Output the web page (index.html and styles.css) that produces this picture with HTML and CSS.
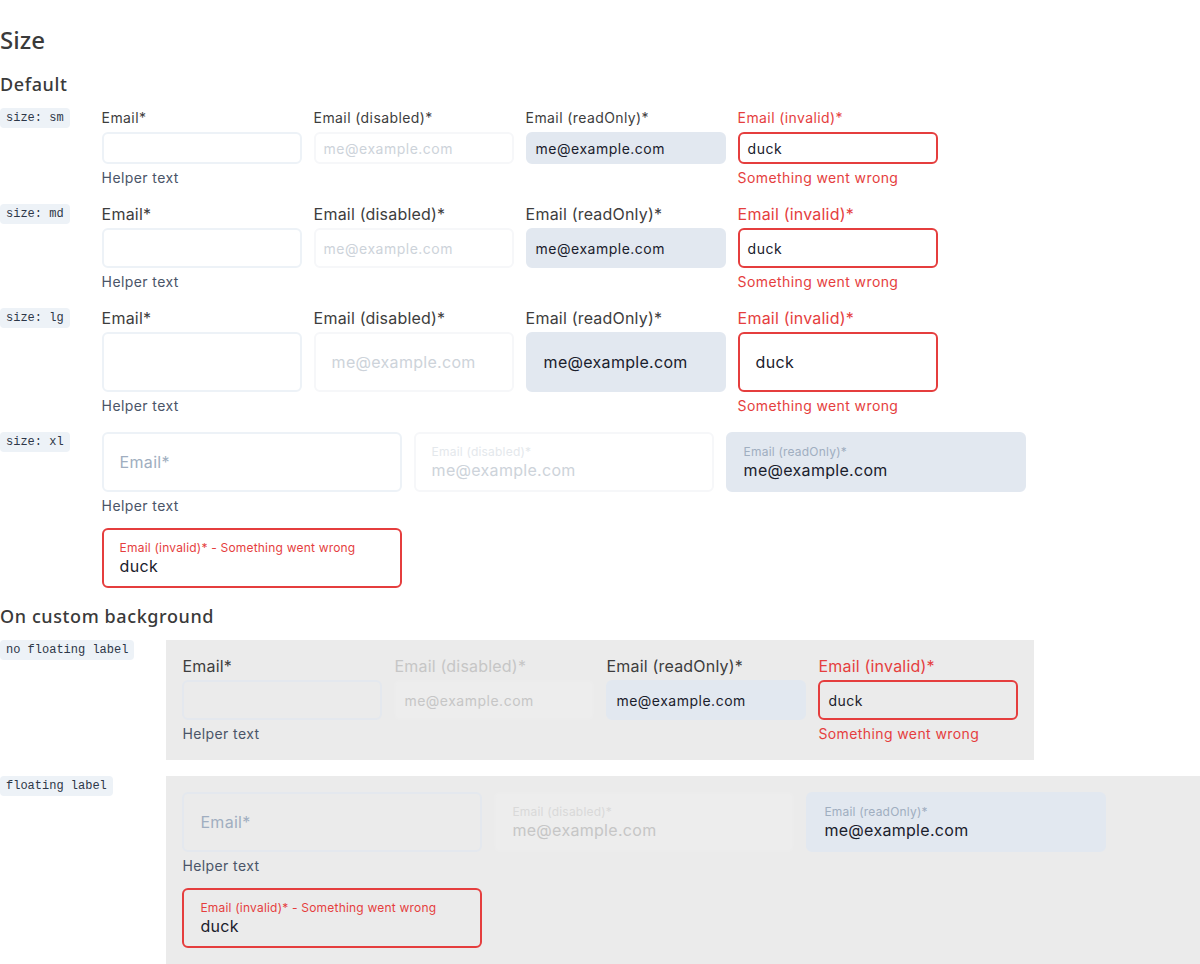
FILE: index.html
```html
<!DOCTYPE html>
<html>
<head>
<meta charset="utf-8">
<link rel="stylesheet" href="styles.css">
</head>
<body>
<h2 class="title">Size</h2>
<h3 class="subtitle">Default</h3>
<div class="grid">
  <span class="tag">size: sm</span>
  <div class="fields">
    <div class="field sm"><div class="label">Email*</div><div class="input"></div><div class="helper">Helper text</div></div>
    <div class="field sm"><div class="label">Email (disabled)*</div><div class="input disabled">me@example.com</div></div>
    <div class="field sm"><div class="label">Email (readOnly)*</div><div class="input readonly">me@example.com</div></div>
    <div class="field sm invalid"><div class="label">Email (invalid)*</div><div class="input">duck</div><div class="helper">Something went wrong</div></div>
  </div>

  <span class="tag">size: md</span>
  <div class="fields">
    <div class="field md"><div class="label">Email*</div><div class="input"></div><div class="helper">Helper text</div></div>
    <div class="field md"><div class="label">Email (disabled)*</div><div class="input disabled">me@example.com</div></div>
    <div class="field md"><div class="label">Email (readOnly)*</div><div class="input readonly">me@example.com</div></div>
    <div class="field md invalid"><div class="label">Email (invalid)*</div><div class="input">duck</div><div class="helper">Something went wrong</div></div>
  </div>

  <span class="tag">size: lg</span>
  <div class="fields">
    <div class="field lg"><div class="label">Email*</div><div class="input"></div><div class="helper">Helper text</div></div>
    <div class="field lg"><div class="label">Email (disabled)*</div><div class="input disabled">me@example.com</div></div>
    <div class="field lg"><div class="label">Email (readOnly)*</div><div class="input readonly">me@example.com</div></div>
    <div class="field lg invalid"><div class="label">Email (invalid)*</div><div class="input">duck</div><div class="helper">Something went wrong</div></div>
  </div>

  <span class="tag">size: xl</span>
  <div class="fields">
    <div class="field xl"><div class="input"><span class="placeholder">Email*</span></div><div class="helper">Helper text</div></div>
    <div class="field xl"><div class="input disabled"><span class="flabel">Email (disabled)*</span><span class="value">me@example.com</span></div></div>
    <div class="field xl"><div class="input readonly"><span class="flabel">Email (readOnly)*</span><span class="value">me@example.com</span></div></div>
    <div class="field xl invalid"><div class="input"><span class="flabel">Email (invalid)* - Something went wrong</span><span class="value">duck</span></div></div>
  </div>
</div>

<h3 class="subtitle section">On custom background</h3>
<div class="grid">
  <span class="tag">no floating label</span>
  <div class="panel">
    <div class="field md"><div class="label">Email*</div><div class="input"></div><div class="helper">Helper text</div></div>
    <div class="field md dis"><div class="label">Email (disabled)*</div><div class="input disabled">me@example.com</div></div>
    <div class="field md"><div class="label">Email (readOnly)*</div><div class="input readonly">me@example.com</div></div>
    <div class="field md invalid"><div class="label">Email (invalid)*</div><div class="input">duck</div><div class="helper">Something went wrong</div></div>
  </div>

  <span class="tag">floating label</span>
  <div class="panel">
    <div class="field xl"><div class="input"><span class="placeholder">Email*</span></div><div class="helper">Helper text</div></div>
    <div class="field xl"><div class="input disabled"><span class="flabel">Email (disabled)*</span><span class="value">me@example.com</span></div></div>
    <div class="field xl"><div class="input readonly"><span class="flabel">Email (readOnly)*</span><span class="value">me@example.com</span></div></div>
    <div class="field xl invalid"><div class="input"><span class="flabel">Email (invalid)* - Something went wrong</span><span class="value">duck</span></div></div>
  </div>
</div>
</body>
</html>
```
FILE: styles.css
```css
html, body {
  margin: 0;
  padding: 0;
}
body {
  font-family: Inter, "Noto Sans", sans-serif;
  color: #3d3d3d;
  background: #ffffff;
}
.title {
  font-family: "Noto Sans", sans-serif;
  font-weight: 500;
  font-size: 24px;
  line-height: 32px;
  margin: 24px 0 16px;
  color: #3a3a3a;
  letter-spacing: 0;
}
.subtitle {
  font-family: "Noto Sans", sans-serif;
  font-weight: 500;
  font-size: 18px;
  line-height: 24px;
  margin: 0 0 12px;
  color: #3a3a3a;
  letter-spacing: 0.6px;
}
.subtitle.section {
  margin-top: 16px;
}
.grid {
  display: grid;
  grid-template-columns: max-content 1fr;
  column-gap: 32px;
  row-gap: 16px;
  align-items: start;
}
.tag {
  justify-self: start;
  font-family: "Liberation Mono", monospace;
  font-size: 12px;
  line-height: 20px;
  padding: 0 6px;
  background: #edf2f7;
  border-radius: 4px;
  color: #2d3748;
}
.fields, .panel {
  display: flex;
  flex-wrap: wrap;
  gap: 12px;
}
.panel {
  justify-self: start;
  background: #ebebeb;
  padding: 16px;
}
.field {
  width: 200px;
  display: flex;
  flex-direction: column;
  gap: 4px;
}
.field.xl {
  width: 300px;
}
.label {
  font-size: 14px;
  line-height: 20px;
  color: #3d3d3d;
  letter-spacing: 0.4px;
}
.md .label, .lg .label {
  font-size: 16px;
  letter-spacing: 0.2px;
}
.input {
  box-sizing: border-box;
  height: 32px;
  border: 2px solid #edf2f7;
  border-radius: 6px;
  padding: 0 8px;
  display: flex;
  align-items: center;
  font-size: 14px;
  letter-spacing: 0.5px;
  color: #1a202c;
}
.md .input { height: 40px; }
.lg .input { height: 60px; padding: 0 16px; font-size: 16px; letter-spacing: 0.3px; }
.xl .input {
  height: 60px;
  padding: 0 16px;
  flex-direction: column;
  align-items: flex-start;
  justify-content: center;
  letter-spacing: 0;
}
.helper {
  font-size: 14px;
  line-height: 20px;
  color: #4a5568;
  letter-spacing: 0.4px;
}
.input.disabled {
  border-color: #f6f7f9;
  color: #cdd3da;
}
.input.readonly {
  background: #e2e8f0;
  border-color: #e2e8f0;
}
.invalid .label, .invalid .helper, .invalid .flabel {
  color: #e53e3e;
}
.invalid .input {
  border-color: #e53e3e;
}
.placeholder {
  font-size: 16px;
  line-height: 20px;
  color: #a0aec0;
  letter-spacing: 0.3px;
}
.flabel {
  font-size: 12px;
  line-height: 16px;
  color: #a0aec0;
  letter-spacing: 0.2px;
}
.value {
  font-size: 16px;
  line-height: 20px;
  letter-spacing: 0.3px;
}
.disabled .flabel {
  color: #e4e8ec;
}
.panel .input {
  border-color: #e4e8ee;
}
.panel .input.readonly {
  border-color: #e2e8f0;
}
.panel .invalid .input {
  border-color: #e53e3e;
}
.panel .input.disabled {
  background: #ededed;
  border-color: #ececec;
  color: #c6c6c6;
}
.panel .dis .label {
  color: #c6c6c6;
}
.panel .disabled .flabel {
  color: #d9d9d9;
}
```
